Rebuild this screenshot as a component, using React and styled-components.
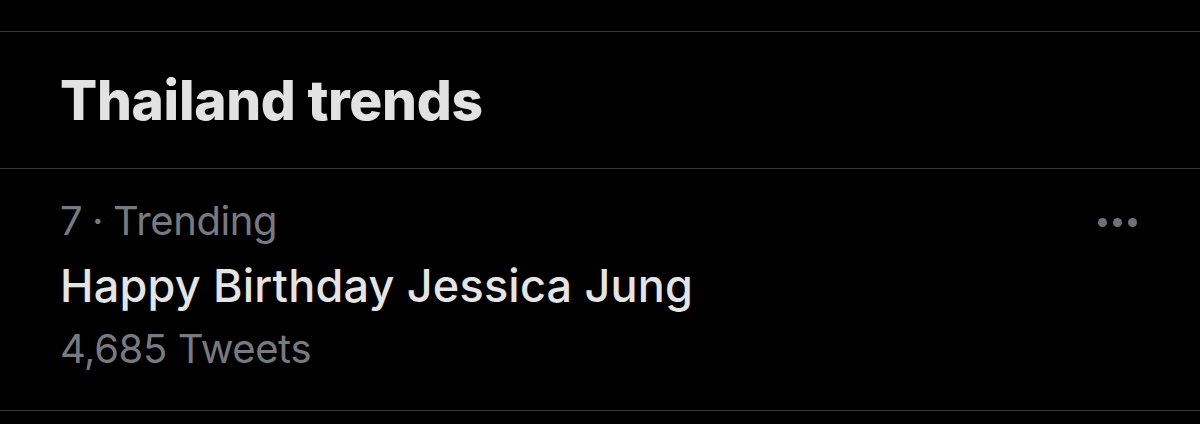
import React from "react";
import styled, { createGlobalStyle } from "styled-components";

const GlobalStyle = createGlobalStyle`
	html, body {
		margin: 0;
		padding: 0;
		background: #000;
	}

	body {
		font-family: Inter, "Noto Sans", "Liberation Sans", sans-serif;
		-webkit-font-smoothing: antialiased;
	}
`;

const trend = {
	rank: 7,
	context: "Trending",
	name: "Happy Birthday Jessica Jung",
	count: "4,685 Tweets",
};

const App = () => {
	return (
		<StyledPage>
			<GlobalStyle />
			<StyledPanel>
				<StyledHeader>
					<h2>Thailand trends</h2>
				</StyledHeader>
				<StyledTrend>
					<div className="trend-info">
						<StyledMeta $tight>
							{trend.rank} · {trend.context}
						</StyledMeta>
						<StyledName>{trend.name}</StyledName>
						<StyledMeta>{trend.count}</StyledMeta>
					</div>
					<StyledMore aria-label="More">
						<span />
						<span />
						<span />
					</StyledMore>
				</StyledTrend>
			</StyledPanel>
		</StyledPage>
	);
};

const StyledPage = styled.div`
	width: 1200px;
	height: 424px;
	padding-top: 31px;
	box-sizing: border-box;
	background: #000;
	overflow: hidden;
`;

const StyledPanel = styled.section`
	display: flex;
	flex-direction: column;
	border-top: 1px solid #38393b;
	border-bottom: 1px solid #38393b;
`;

const StyledHeader = styled.div`
	display: flex;
	align-items: center;
	height: 136px;
	padding: 0 60px;
	border-bottom: 1px solid #38393b;

	h2 {
		margin: 0;
		font-size: 55px;
		font-weight: 800;
		line-height: 136px;
		letter-spacing: -0.3px;
		color: #e2e2e2;
	}
`;

const StyledTrend = styled.div`
	display: flex;
	justify-content: space-between;
	align-items: flex-start;
	padding: 28px 63px 37px 60px;

	.trend-info {
		display: flex;
		flex-direction: column;
	}
`;

const StyledMeta = styled.div`
	font-size: 40px;
	line-height: 48px;
	letter-spacing: -0.4px;
	word-spacing: ${(props) => (props.$tight ? "-1px" : "0")};
	color: #777a80;
`;

const StyledName = styled.div`
	margin: 12px 0 10px;
	font-size: 45px;
	font-weight: 500;
	line-height: 58px;
	letter-spacing: 0.2px;
	color: #e4e4e4;
`;

const StyledMore = styled.div`
	display: flex;
	align-items: center;
	gap: 6px;
	height: 50px;

	span {
		width: 9px;
		height: 9px;
		border-radius: 50%;
		background: #6e7176;
	}
`;

export default App;
